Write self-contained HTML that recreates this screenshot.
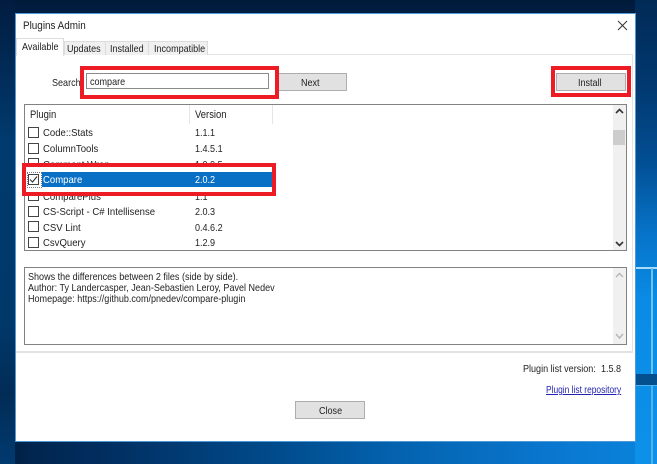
<!DOCTYPE html>
<html><head><meta charset="utf-8">
<style>
html,body{margin:0;padding:0}
body{width:657px;height:464px;position:relative;overflow:hidden;background:#003a6e;font-family:"Liberation Sans",sans-serif;font-size:10.5px;color:#222}
div{position:absolute;box-sizing:border-box}
.t{white-space:nowrap;line-height:14px;height:14px;margin-top:1px;transform:scaleX(.86);transform-origin:0 0}
.t.n{transform:scaleX(.91)}
.btn{background:#e1e1e1;border:1px solid #adadad}
.cb{width:11px;height:11px;border:1px solid #444;background:#fff;left:28px}
.red{border:4px solid #ed1c24}
</style></head><body>
<div style="left:0;top:0;width:657px;height:464px;background:linear-gradient(90deg,#011d3f 0,#01264f 5%,#012d5e 15%,#014b8c 42%,#0462ae 60%,#0a78d0 85%,#0a84dc 100%)"></div>
<div style="left:0;top:0;width:657px;height:100px;background:linear-gradient(180deg,#011a3a 0,#012a58 60%,rgba(1,60,120,0) 100%)"></div>
<div style="left:0;top:0;width:15px;height:464px;background:linear-gradient(180deg,#011c40 0,#013a6e 30%,#01386a 70%,#012c56 85%,#013a70 100%)"></div>
<div style="left:635px;top:0;width:22px;height:464px;background:linear-gradient(180deg,#012a56 0,#01386f 18%,#024f94 35%,#0673c8 50%,#0a8ce6 65%,#0c90e8 100%)"></div>
<div style="left:635px;top:267px;width:22px;height:2px;background:#a8dcf8"></div>
<div style="left:651px;top:268px;width:2px;height:106px;background:#6cc4f4"></div>
<div style="left:635px;top:374px;width:22px;height:11px;background:#04508f"></div>
<div style="left:651px;top:385px;width:2px;height:79px;background:#4fb4ee"></div>
<div style="left:636px;top:385px;width:21px;height:1px;background:#4fb4ee"></div>

<div style="left:15px;top:13px;width:621px;height:429px;background:#fff;border:1px solid #4f9ad6"></div>
<div class="t" style="left:23px;top:18px;font-size:11px;transform:scaleX(.9)">Plugins Admin</div>
<svg style="position:absolute;left:617px;top:20px" width="11" height="11"><path d="M1 1L10 10M10 1L1 10" stroke="#333" stroke-width="1" fill="none"/></svg>

<div style="left:16px;top:54px;width:617px;height:299px;border:1px solid #e3e3e3;border-width:1px 1px 2px 0"></div>
<div style="left:64px;top:41px;width:42px;height:14px;background:#f0f0f0;border:1px solid #dcdcdc;border-bottom:0"></div>
<div style="left:105px;top:41px;width:44px;height:14px;background:#f0f0f0;border:1px solid #dcdcdc;border-bottom:0"></div>
<div style="left:148px;top:41px;width:60px;height:14px;background:#f0f0f0;border:1px solid #dcdcdc;border-bottom:0"></div>
<div style="left:16px;top:38px;width:48px;height:18px;background:#fff;border:1px solid #dcdcdc;border-bottom:0"></div>
<div class="t" style="left:22px;top:39px">Available</div>
<div class="t" style="left:67px;top:41px">Updates</div>
<div class="t" style="left:110px;top:41px">Installed</div>
<div class="t" style="left:154px;top:41px">Incompatible</div>

<div class="t" style="left:52px;top:75px">Search</div>
<div style="left:86px;top:73px;width:183px;height:16px;border:1px solid #8a8a8a;background:#fff"></div>
<div class="t" style="left:90px;top:74px">compare</div>
<div class="btn" style="left:276px;top:73px;width:71px;height:18px"></div>
<div class="t" style="left:301px;top:75px">Next</div>
<div class="red" style="left:80px;top:66px;width:199px;height:33px"></div>
<div class="btn" style="left:556px;top:73px;width:70px;height:18px"></div>
<div class="t" style="left:578px;top:75px">Install</div>
<div class="red" style="left:551px;top:66px;width:80px;height:31px"></div>

<div style="left:24px;top:104px;width:603px;height:147px;border:1px solid #828282;background:#fff"></div>
<div style="left:189px;top:105px;width:1px;height:19px;background:#e5e5e5"></div>
<div style="left:272px;top:105px;width:1px;height:19px;background:#e5e5e5"></div>
<div class="t" style="left:30px;top:107px;font-size:11px">Plugin</div>
<div class="t" style="left:195px;top:107px;font-size:11px">Version</div>
<div style="left:613px;top:105px;width:13px;height:145px;background:#f0f0f0"></div>
<div style="left:613px;top:130px;width:12px;height:15px;background:#cdcdcd"></div>
<svg style="position:absolute;left:613px;top:106px" width="13" height="144"><path d="M3 7L6.500 3.500L10 7" stroke="#333" stroke-width="1.600" fill="none"/><path d="M3 136L6.500 139.500L10 136" stroke="#333" stroke-width="1.600" fill="none"/></svg>

<div class="cb" style="top:127px"></div><div class="t n" style="left:43px;top:125px">Code::Stats</div><div class="t" style="left:195px;top:125px">1.1.1</div>
<div class="cb" style="top:143px"></div><div class="t n" style="left:43px;top:141px">ColumnTools</div><div class="t" style="left:195px;top:141px">1.4.5.1</div>
<div class="cb" style="top:158px"></div><div class="t n" style="left:43px;top:157px">Comment Wrap</div><div class="t" style="left:195px;top:157px">1.0.0.5</div>
<div class="cb" style="top:190px"></div><div class="t n" style="left:43px;top:189px">ComparePlus</div><div class="t" style="left:195px;top:189px">1.1</div>
<div class="cb" style="top:206px"></div><div class="t n" style="left:43px;top:204px">CS-Script - C# Intellisense</div><div class="t" style="left:195px;top:204px">2.0.3</div>
<div class="cb" style="top:221px"></div><div class="t n" style="left:43px;top:220px">CSV Lint</div><div class="t" style="left:195px;top:220px">0.4.6.2</div>
<div class="cb" style="top:237px"></div><div class="t n" style="left:43px;top:235px">CsvQuery</div><div class="t" style="left:195px;top:235px">1.2.9</div>

<div style="left:25px;top:167px;width:248px;height:25px;background:#fff"></div>
<div style="left:42px;top:172px;width:230px;height:15px;background:#0a70c6"></div>
<div style="left:27px;top:172px;width:15px;height:16px;border:1px dotted #777"></div>
<div class="cb" style="top:174px;background:#fff"></div>
<svg style="position:absolute;left:28px;top:174px" width="11" height="11"><path d="M2 5.500L4.500 8L9 2.500" stroke="#333" stroke-width="1.100" fill="none"/></svg>
<div class="t n" style="left:43px;top:172px;color:#fff">Compare</div>
<div class="t" style="left:195px;top:172px;color:#fff">2.0.2</div>
<div class="red" style="left:22px;top:163px;width:254px;height:33px"></div>

<div style="left:24px;top:267px;width:603px;height:78px;border:1px solid #828282;background:#fff"></div>
<div style="left:613px;top:268px;width:13px;height:76px;background:#f0f0f0"></div>
<svg style="position:absolute;left:613px;top:268px" width="13" height="76"><path d="M3 9L6.500 5.500L10 9" stroke="#b5b5b5" stroke-width="1.400" fill="none"/><path d="M3 66L6.500 70L10 66" stroke="#b5b5b5" stroke-width="1.400" fill="none"/></svg>
<div class="t" style="left:28px;top:269px">Shows the differences between 2 files (side by side).</div>
<div class="t" style="left:28px;top:280px">Author: Ty Landercasper, Jean-Sebastien Leroy, Pavel Nedev</div>
<div class="t" style="left:28px;top:291px">Homepage: https://github.com/pnedev/compare-plugin</div>

<div class="t" style="left:523px;top:361px">Plugin list version:</div>
<div class="t" style="left:601px;top:361px">1.5.8</div>
<div class="t" style="left:546px;top:382px;color:#2323b0;text-decoration:underline;transform:scaleX(.8)">Plugin list repository</div>
<div class="btn" style="left:295px;top:401px;width:70px;height:18px"></div>
<div class="t" style="left:319px;top:403px">Close</div>
</body></html>
